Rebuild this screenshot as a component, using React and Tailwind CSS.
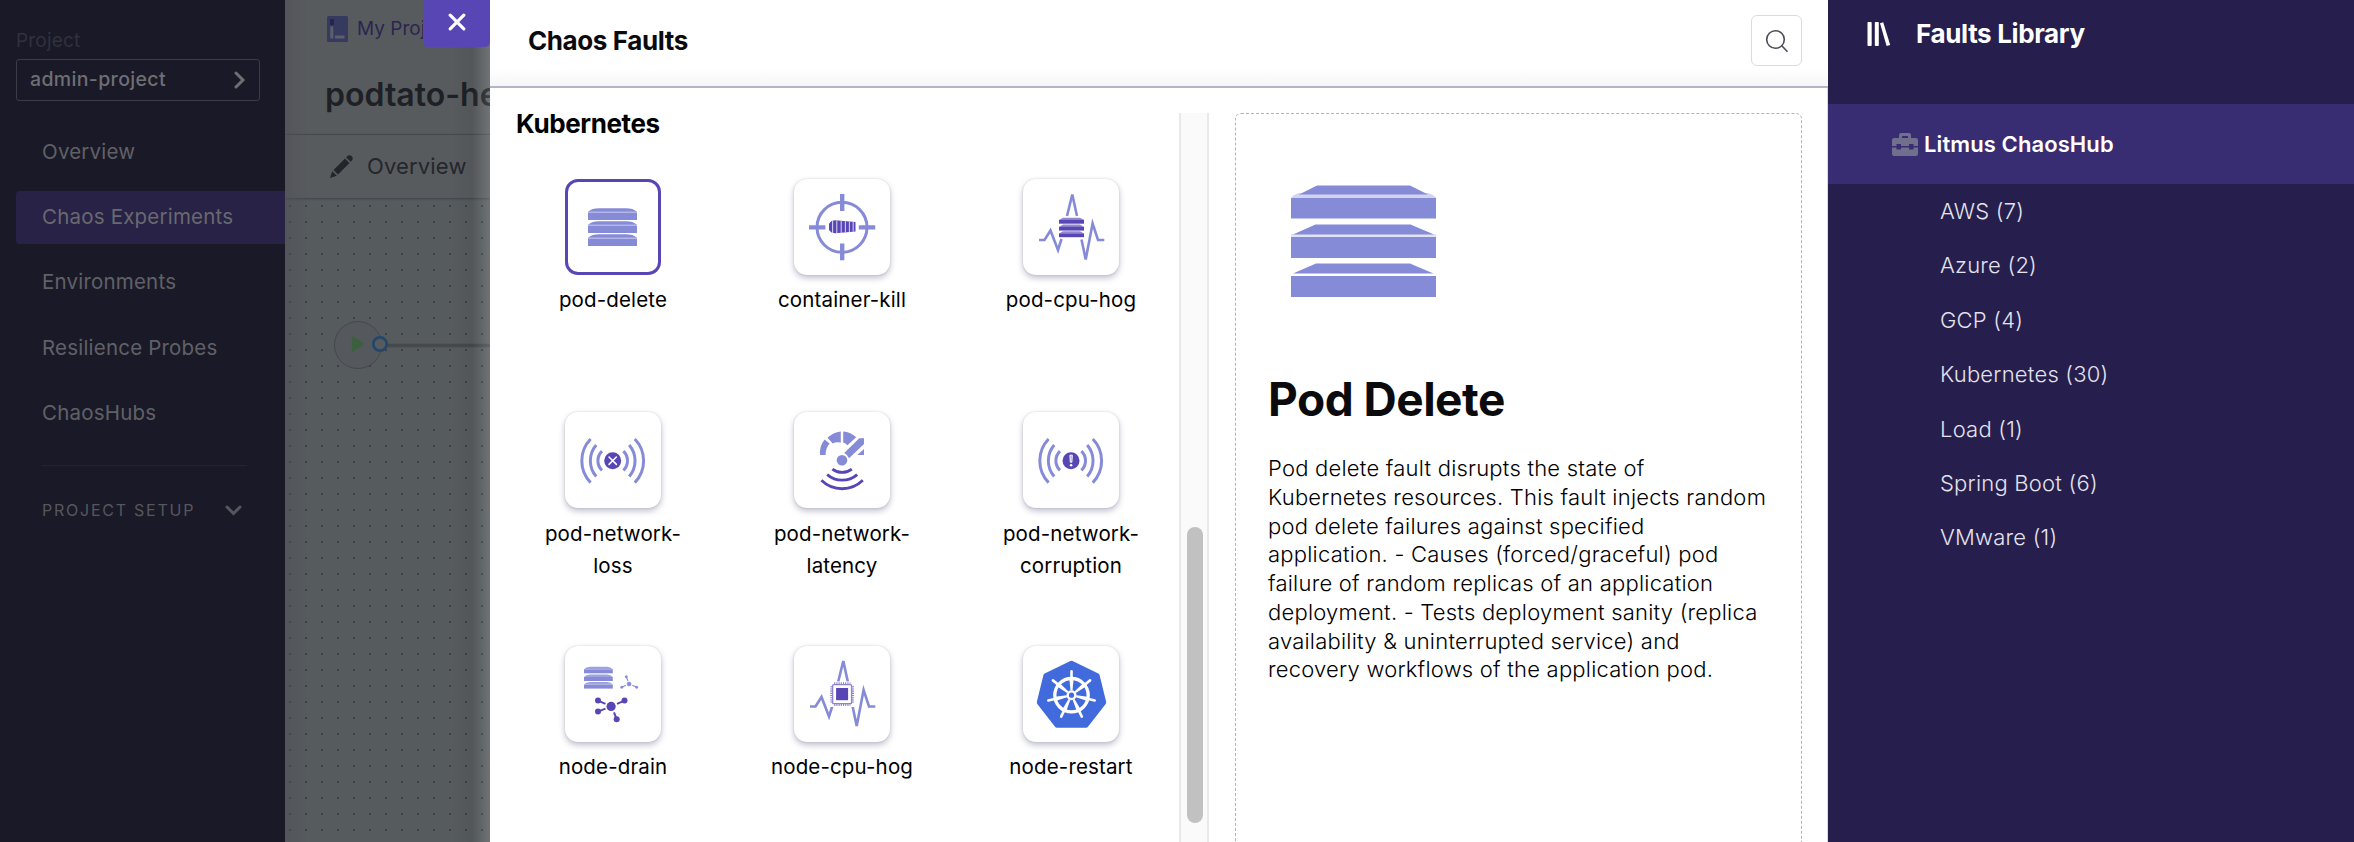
import React from "react";

const LILAC = "#868bd8";
const VIOLET = "#5846b5";

function PodStack() {
  return (
    <g fill={LILAC}>
      {[29.3, 42.3, 55.3].map((y) => (
        <g key={y}>
          <path d={`M23 ${y + 3.4}Q27 ${y} 34 ${y}H61Q68 ${y} 72 ${y + 3.4}Z`} />
          <path opacity=".35" d={`M23 ${y + 3}H72V${y + 4.5}H23Z`} />
          <path d={`M23 ${y + 4.2}H72V${y + 11.6}H23Z`} />
        </g>
      ))}
    </g>
  );
}

function Crosshair() {
  return (
    <g>
      <circle cx="48" cy="48.3" r="25" fill="none" stroke={LILAC} strokeWidth="3" />
      <path fill={LILAC} d="M46 15h4.4v17H46zM46 64.6h4.4v16.6H46zM15 46.2h16.4v4.2H15zM64.8 46.2h16.4v4.2H64.8z" />
      <path fill={VIOLET} d="M35 44.5L37.5 42L41 41.2L61.5 43V52.6L41 54.3L37.5 53.5L35 51Z" />
      <path fill="none" stroke="#d2ccee" strokeWidth="1.1" d="M38.6 41.8V54M42.8 41.2V54.2M47.2 41.6V54M51.4 42V53.5M55.4 42.3V53.2M59.2 42.6V52.8" />
    </g>
  );
}

function Pulse({ dy = 0 }) {
  return (
    <path
      transform={`translate(0 ${dy})`}
      fill="none"
      stroke={LILAC}
      strokeWidth="2.6"
      d="M16 61H21.5L27.5 51.5L35 71L38.5 60M44 37L49.3 15.5L54 37M58.5 60.5L62.7 80.5L69.6 44.5L75 61H81.3"
    />
  );
}

function PodCpu() {
  return (
    <g>
      <Pulse />
      {[38.7, 45.6, 52.2].map((y) => (
        <g key={y}>
          <path fill="#9488d2" d={`M36 ${y + 2.4}L40 ${y}H57L61 ${y + 2.4}Z`} />
          <path fill={VIOLET} d={`M36 ${y + 2.2}H61V${y + 6}H36Z`} />
        </g>
      ))}
    </g>
  );
}

function Waves() {
  const d = "M25.6 27A31.4 31.4 0 0 0 25.6 70.6M31.2 33A24.3 24.3 0 0 0 31.2 64.6M37 39.2A13.3 13.3 0 0 0 37 58.4";
  return (
    <g fill="none" stroke={LILAC} strokeWidth="3">
      <path d={d} />
      <path d={d} transform="translate(95.4 0) scale(-1 1)" />
    </g>
  );
}

function NetLoss() {
  return (
    <g>
      <Waves />
      <circle cx="47.7" cy="48.7" r="8.5" fill={VIOLET} />
      <path stroke="#fff" strokeWidth="1.5" strokeLinecap="round" d="M44 45L51.4 52.4M51.4 45L44 52.4" />
    </g>
  );
}

function NetCorruption() {
  return (
    <g>
      <Waves />
      <circle cx="48" cy="48.7" r="8.5" fill={VIOLET} />
      <path fill="#a79bdc" stroke="#fff" strokeWidth="1" d="M46.9 43.2h2.4l-.4 7h-1.6z" />
      <circle cx="48.1" cy="53.3" r="1.3" fill="#fff" />
    </g>
  );
}

function NetLatency() {
  return (
    <g>
      <g fill={LILAC}>
        <path d="M26 43A22 22 0 0 1 30.6 27.6L35.6 31.4A17 17 0 0 0 31.6 43Z" />
        <path d="M33.4 25.8A22 22 0 0 1 46.8 19.4V30.4Q41.5 29.6 38.8 31.4Z" />
        <path d="M49.2 19.4A22 22 0 0 1 62.2 25.2L53.4 33.2Q51.5 31.2 49.2 30.6Z" />
        <path d="M50.2 41L65.3 26.2H70V32L55 46.2Q53.8 42.8 50.2 41Z" />
        <path d="M63.8 42.6L70 37V43H63.8Z" />
        <circle cx="48" cy="48.2" r="5.3" />
      </g>
      <path
        fill="none"
        stroke={VIOLET}
        strokeWidth="2.8"
        d="M38.4 57.1A15.7 15.7 0 0 0 57.8 57.1M33.2 62.6A23 23 0 0 0 63.2 62.6M27.4 68.3A29.6 29.6 0 0 0 68.8 68.3"
      />
    </g>
  );
}

function NodeDrain() {
  return (
    <g>
      {[20.7, 28.4, 36].map((y) => (
        <g key={y} fill={LILAC}>
          <path opacity=".8" d={`M19 ${y + 2.6}Q21 ${y} 25 ${y}H42Q46 ${y} 47.8 ${y + 2.6}Z`} />
          <path d={`M19 ${y + 2.6}H47.8V${y + 6.6}H19Z`} />
        </g>
      ))}
      <g fill={LILAC} stroke={LILAC}>
        <path strokeWidth="1.1" d="M61.4 31L63 35M57 41L61 39.2M71.5 41L67.3 39.2" />
        <circle cx="64.1" cy="38" r="2" strokeWidth=".6" />
        <circle cx="61.3" cy="30.8" r="1.3" strokeWidth=".3" />
        <circle cx="56.8" cy="41.2" r="1.3" strokeWidth=".3" />
        <circle cx="71.7" cy="41.3" r="1.3" strokeWidth=".3" />
      </g>
      <g fill={VIOLET}>
        <path stroke={VIOLET} strokeWidth="2" d="M33 54.7L40.5 57.8M59.5 54.7L52 57.8M33 65.6L40.5 62.6M51.7 73.3L49 66.3" />
        <circle cx="46.1" cy="60.4" r="4.6" />
        <circle cx="33" cy="54.6" r="3" />
        <circle cx="59.5" cy="54.6" r="3" />
        <circle cx="33" cy="65.6" r="3" />
        <circle cx="51.7" cy="73.3" r="3" />
      </g>
    </g>
  );
}

function NodeCpu() {
  return (
    <g>
      <Pulse dy={-0.5} />
      <rect x="35" y="35.4" width="26" height="25.6" fill="#fff" />
      <rect x="38.6" y="38.6" width="19" height="19" rx="1.2" fill="none" stroke="#8f82cf" strokeWidth="1.4" />
      <g stroke="#8f82cf" strokeWidth="2" strokeDasharray="1.1 1.1">
        <path d="M40.2 37.2H56.4M40.2 59H56.4M37.2 40.2V56.4M59 40.2V56.4" />
      </g>
      <rect x="42.1" y="42" width="12" height="12.2" fill={VIOLET} />
    </g>
  );
}

function Helm() {
  const spokes = [0, 1, 2, 3, 4, 5, 6];
  return (
    <g>
      <path
        fill="#416bdd"
        stroke="#416bdd"
        strokeWidth="5"
        strokeLinejoin="round"
        d="M48.5 17.3L74.2 29.8L80.7 56.4L63 79.2H34L16.3 56.4L22.8 29.8Z"
      />
      <circle cx="48.5" cy="49.2" r="16.7" fill="none" stroke="#fff" strokeWidth="3.3" />
      {spokes.map((k) => (
        <g key={k} transform={`rotate(${(k * 360) / 7} 48.5 49.2)`}>
          <path fill="#fff" d="M47.5 44.5L46.4 33H50.6L49.5 44.5Z" />
          <path stroke="#fff" strokeWidth="2.6" strokeLinecap="round" d="M48.5 34V25.4" />
        </g>
      ))}
      <circle cx="48.5" cy="49.2" r="3.8" fill="none" stroke="#fff" strokeWidth="2.4" />
    </g>
  );
}

const faults = [
  { name: "pod-delete", Icon: PodStack, selected: true },
  { name: "container-kill", Icon: Crosshair },
  { name: "pod-cpu-hog", Icon: PodCpu },
  { name: "pod-network-loss", Icon: NetLoss },
  { name: "pod-network-latency", Icon: NetLatency },
  { name: "pod-network-corruption", Icon: NetCorruption },
  { name: "node-drain", Icon: NodeDrain },
  { name: "node-cpu-hog", Icon: NodeCpu },
  { name: "node-restart", Icon: Helm },
];

function FaultCard({ name, Icon, selected }) {
  return (
    <div className="flex h-[233.5px] flex-col items-center">
      <div
        className={
          selected
            ? "size-24 rounded-[13px] bg-white shadow-[inset_0_0_0_3px_#5846b5]"
            : "size-24 rounded-[13px] bg-white shadow-[0_0_2px_rgba(40,41,61,0.16),0_3px_6px_rgba(96,97,132,0.4)]"
        }
      >
        <svg className="size-24" viewBox="0 0 96 96">
          <Icon />
        </svg>
      </div>
      <div className="mt-[9.5px] max-w-[150px] text-center text-[20.5px] leading-8 tracking-[0.15px] text-black">
        {name}
      </div>
    </div>
  );
}

function Sidebar() {
  const items = ["Overview", "Chaos Experiments", "Environments", "Resilience Probes", "ChaosHubs"];
  return (
    <aside className="flex w-[285px] shrink-0 flex-col bg-[#1a1928] pl-4 text-[#606166]">
      <div className="mt-7 text-[19px] leading-6 tracking-[0.2px] text-[#2f323d]">
        <span className="relative top-px">Project</span>
      </div>
      <div className="mt-[7px] flex h-[42px] w-[244px] items-center justify-between rounded-[3px] border border-[#3a3c47] pl-[13px] pr-[13px] text-[19.5px] font-medium tracking-[0.35px] text-[#6e6f73]">
        <span>admin-project</span>
        <svg className="h-[18px] w-[12px]" viewBox="0 0 12 18" fill="none" stroke="#6e6f73" strokeWidth="3">
          <path d="M2 2l7 7-7 7" strokeLinecap="round" />
        </svg>
      </div>
      <nav className="mt-[24.5px] flex flex-col gap-[12.3px] text-[20.5px] tracking-[0.2px]">
        {items.map((t) => (
          <div
            key={t}
            className={
              t === "Chaos Experiments"
                ? "flex h-[53px] items-center rounded-l-[4px] bg-[#272246] pl-[26px] text-[#69696f]"
                : "flex h-[53px] items-center pl-[26px]"
            }
          >
            {t}
          </div>
        ))}
      </nav>
      <div className="ml-[26px] mt-[25.5px] h-px w-[205px] bg-[#232332]" />
      <div className="ml-[26px] mt-[32px] flex w-[200px] items-center justify-between text-[16px] leading-6 tracking-[1.75px] text-[#56575d]">
        <span>PROJECT SETUP</span>
        <svg className="h-[11px] w-[17px]" viewBox="0 0 17 11" fill="none" stroke="#56575d" strokeWidth="3">
          <path d="M2 2l6.500 6.500 6.500-6.500" strokeLinecap="round" />
        </svg>
      </div>
    </aside>
  );
}

function Studio() {
  return (
    <main className="relative flex w-[205px] shrink-0 flex-col overflow-hidden bg-[#585b5e]">
      <div className="ml-[42px] mt-[16px] flex h-[26px] items-center gap-[9px] whitespace-nowrap text-[19px] text-[#2a2550]">
        <svg className="h-[26px] w-[21px] shrink-0" viewBox="0 0 21 26">
          <rect width="21" height="26" rx="1.500" fill="#353a5e" />
          <path fill="#27224f" d="M3 3h4v6H3z" />
          <path fill="#5d6069" d="M3.300 10.500h3v12h-3zM8 19.500h9.500v3H8z" />
        </svg>
        <span>My Project</span>
      </div>
      <div className="ml-[40px] mt-[31px] h-[44px] whitespace-nowrap text-[32px] font-semibold leading-[44px] text-[#1d2025]">
        podtato-head
      </div>
      <div className="relative mt-[17px] flex h-[64px] items-center gap-[14px] border-t border-[#45484c] bg-[#585b5e] pl-[45px] text-[22px] tracking-[0.15px] text-[#24262c] shadow-[0_1px_2px_rgba(30,32,40,0.4)]">
        <svg className="size-[23px]" viewBox="0 0 23 23" fill="#22252c">
          <path d="M0 23l2.200-6.800 4.600 4.600zM3.500 15L15 3.500 19.500 8 8 19.500zM16.200 2.400l1.200-1.300a3.200 3.200 0 0 1 4.500 4.500l-1.200 1.200z" />
        </svg>
        <span>Overview</span>
      </div>
      <div className="flex-1 bg-[#565b5e] bg-[radial-gradient(circle_at_5px_8px,#3d4144_0.9px,transparent_1.4px)] bg-[length:16px_16px]">
        <svg className="mt-[122px] h-[50px] w-[205px]" viewBox="0 0 205 50">
          <path stroke="#46494c" strokeWidth="3.500" d="M102 25.500H205" />
          <circle cx="73" cy="25" r="23.500" fill="#55585d" stroke="#45484d" />
          <path fill="#3c603d" stroke="#3c603d" strokeWidth="1.500" strokeLinejoin="round" d="M67.500 16.800V31.200L78.500 24Z" />
          <circle cx="95" cy="24" r="6.700" fill="#565b5e" stroke="#24466b" strokeWidth="2.700" />
        </svg>
      </div>
      <div className="absolute inset-y-0 right-0 w-[40px] bg-[linear-gradient(to_right,rgba(0,0,0,0),rgba(0,0,0,0.05)_55%,rgba(255,255,255,0.15))]" />
      <div className="absolute inset-y-0 left-0 w-[24px] bg-gradient-to-r from-[#4f4f56]/50 to-transparent" />
      <div className="absolute right-0 top-0 flex h-[47px] w-[67px] items-center justify-center rounded-b-[5px] bg-[#5846b5] pb-[3px]">
        <svg className="size-[18px]" viewBox="0 0 18 18" stroke="#fff" strokeWidth="3.200" strokeLinecap="round">
          <path d="M2.200 2.200l13.600 13.600M15.800 2.200L2.200 15.800" />
        </svg>
      </div>
    </main>
  );
}

function FaultDetail() {
  return (
    <article className="ml-[26px] mt-[25px] h-[760px] w-[567px] shrink-0 rounded-[6px] border border-dashed border-[#b0b1c4] pl-[32px]">
      <svg className="ml-[22px] mt-[70px] h-[116px] w-[147px]" viewBox="0 0 147 116" fill={LILAC}>
        <path opacity=".38" d="M1 14Q3 11 9 9H138Q144 11 146 14Z" />
        <path d="M27 1.500H120L138 10.500H9ZM1 14H146V34.500H1Z" />
        <path opacity=".25" d="M1 50H146V53H1Z" />
        <path d="M25.500 40.500H120.500L144 50.500H3ZM1 53H146V74H1Z" />
        <path d="M26 79.500H120L143.500 89.500H3ZM1 92H146V113H1Z" />
      </svg>
      <h1 className="mt-[71px] text-[46px] font-bold leading-[56px] tracking-[-0.5px] text-[#0b0b0d]">Pod Delete</h1>
      <p className="mt-[27px] w-[520px] whitespace-nowrap text-[22px] font-light leading-[28.75px] tracking-[0.22px] text-black">
        Pod delete fault disrupts the state of
        <br />
        Kubernetes resources. This fault injects random
        <br />
        pod delete failures against specified
        <br />
        application. - Causes (forced/graceful) pod
        <br />
        failure of random replicas of an application
        <br />
        deployment. - Tests deployment sanity (replica
        <br />
        availability &amp; uninterrupted service) and
        <br />
        recovery workflows of the application pod.
      </p>
    </article>
  );
}

function FaultPanel() {
  return (
    <section className="flex w-[1338px] shrink-0 flex-col bg-white">
      <header className="flex h-[88px] shrink-0 items-center justify-between border-b-2 border-[#b4b4c6] bg-gradient-to-t from-[#f6f6f8] via-white via-20% to-white pb-[5px] pl-[38px] pr-[26px]">
        <h2 className="text-[26px] font-bold tracking-[-0.4px] text-[#0b0b0d]">Chaos Faults</h2>
        <div className="flex size-[51px] items-center justify-center rounded-[6px] border border-[#d9dae6] bg-white">
          <svg className="size-[24px]" viewBox="0 0 24 24" fill="none" stroke="#4b4c58" strokeWidth="1.600">
            <circle cx="10.500" cy="10.500" r="8.800" />
            <path d="M16.800 16.800L22.500 22.800" />
          </svg>
        </div>
      </header>
      <div className="flex min-h-0 flex-1 overflow-hidden border-r border-[#d9dae0]">
        <div className="flex w-[689px] shrink-0 flex-col">
          <h3 className="ml-[26px] mt-[18px] text-[26px] font-bold leading-[36px] tracking-[-0.4px] text-black">Kubernetes</h3>
          <div className="ml-[33px] mt-[36.5px] grid grid-cols-[180px_180px_180px] gap-x-[49px]">
            {faults.map((f) => (
              <FaultCard key={f.name} {...f} />
            ))}
          </div>
        </div>
        <div className="mt-[25px] flex w-[30px] shrink-0 justify-center border-x-2 border-[#e9e9e9] bg-[#fafafa] pt-[414px]">
          <div className="ml-px h-[296px] w-4 rounded-full bg-[#c1c1c1]" />
        </div>
        <FaultDetail />
      </div>
    </section>
  );
}

function Library() {
  const groups = ["AWS (7)", "Azure (2)", "GCP (4)", "Kubernetes (30)", "Load (1)", "Spring Boot (6)", "VMware (1)"];
  return (
    <aside className="flex w-[526px] shrink-0 flex-col bg-[#261e4d] text-white">
      <div className="flex h-[104px] items-start pl-[39px] pt-[14px]">
        <svg className="mt-2 h-[24px] w-[24px]" viewBox="0 0 24 24" fill="#fff">
          <rect x=".5" width="4.200" height="24" rx=".8" />
          <rect x="7.800" width="4" height="24" rx=".8" />
          <path d="M13 1.200l3.200-.9 7 22.600-3.600 1z" />
        </svg>
        <h2 className="ml-[25px] text-[26px] font-bold leading-10 tracking-[-0.35px]">Faults Library</h2>
      </div>
      <div className="flex h-20 items-center gap-[6px] bg-[#382c72] pl-[64px]">
        <svg className="h-[23px] w-[26px]" viewBox="0 0 26 23" fill="#706f8c">
          <path fillRule="evenodd" d="M7 5V2Q7 0 9 0H17Q19 0 19 2V5H24Q26 5 26 7V13H21.500V11H17V13H9V11H4.500V13H0V7Q0 5 2 5ZM10 3V5H16V3Z" />
          <path d="M0 14.500H4.500V16.500H9V14.500H17V16.500H21.500V14.500H26V21Q26 23 24 23H2Q0 23 0 21Z" />
        </svg>
        <span className="text-[22px] font-semibold tracking-[0.1px]">Litmus ChaosHub</span>
      </div>
      <ul className="flex flex-col text-[22px] font-light leading-[54.4px] tracking-[0.22px] text-[#e4e3ec]">
        {groups.map((g) => (
          <li key={g} className="h-[54.400px] pl-[112px]">
            {g}
          </li>
        ))}
      </ul>
    </aside>
  );
}

export default function App() {
  return (
    <div className="flex h-[842px] w-[2354px] overflow-hidden bg-white font-[Inter,sans-serif]">
      <Sidebar />
      <Studio />
      <FaultPanel />
      <Library />
    </div>
  );
}
